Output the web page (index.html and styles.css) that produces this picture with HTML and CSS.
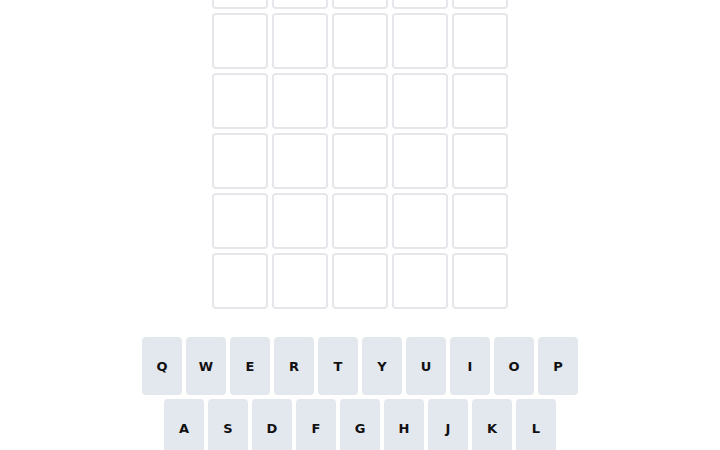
FILE: index.html
```html
<!DOCTYPE html>
<html>
<head lang="en">
    <meta charset="UTF-8">
    <title>Wordle</title>
    <link rel="stylesheet" href="styles.css">
</head>
<body>
<div class="game">
    <div class="board" id="board"></div>
    <div class="keyboard">
        <div class="row">
            <div class="key">Q</div><div class="key">W</div><div class="key">E</div><div class="key">R</div><div class="key">T</div>
            <div class="key">Y</div><div class="key">U</div><div class="key">I</div><div class="key">O</div><div class="key">P</div>
        </div>
        <div class="row">
            <div class="key">A</div><div class="key">S</div><div class="key">D</div><div class="key">F</div><div class="key">G</div>
            <div class="key">H</div><div class="key">J</div><div class="key">K</div><div class="key">L</div>
        </div>
        <div class="row">
            <div class="key wide">ENTER</div><div class="key">Z</div><div class="key">X</div><div class="key">C</div><div class="key">V</div>
            <div class="key">B</div><div class="key">N</div><div class="key">M</div><div class="key wide">⌫</div>
        </div>
    </div>
</div>
<script>
    // 6 行 5 列的空格子
    var board = document.getElementById("board");
    for (var i = 0; i < 30; i++) {
        var tile = document.createElement("div");
        tile.className = "tile";
        board.appendChild(tile);
    }
</script>
</body>
</html>
```

FILE: styles.css
```css
* {
    margin: 0;
    padding: 0;
    box-sizing: border-box;
}

body {
    background: #fff;
    font-family: "Comic Sans MS", "DejaVu Sans", sans-serif;
    overflow: hidden;
    height: 450px;
}

.game {
    display: flex;
    flex-direction: column;
    align-items: center;
    margin-top: -47px;
}

.board {
    display: grid;
    grid-template-columns: repeat(5, 56px);
    grid-auto-rows: 56px;
    gap: 4px;
}

.tile {
    border: 2px solid #e5e7eb;
    border-radius: 4px;
}

.keyboard {
    margin-top: 28px;
    display: flex;
    flex-direction: column;
    gap: 4px;
}

.row {
    display: flex;
    justify-content: center;
    gap: 4px;
}

.key {
    width: 40px;
    height: 58px;
    background: #e3e8ef;
    border-radius: 4px;
    display: flex;
    align-items: center;
    justify-content: center;
    font-size: 13px;
    font-weight: bold;
    color: #111;
}

.key.wide {
    width: 62px;
    font-size: 12px;
}
```
